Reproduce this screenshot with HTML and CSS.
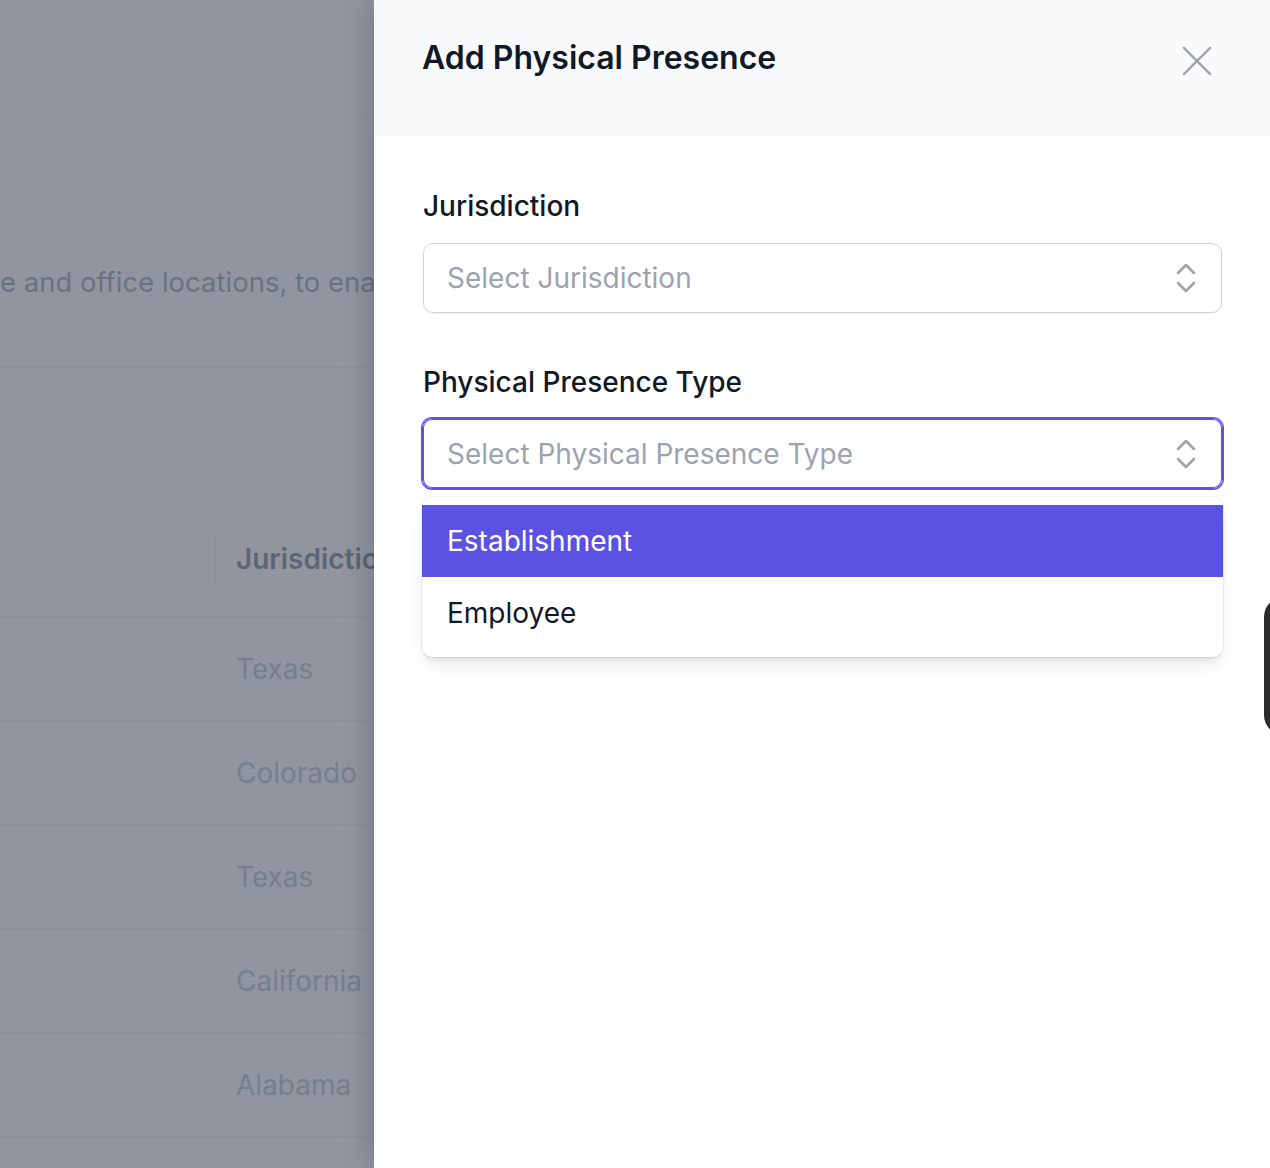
FILE: index.html
```html
<!DOCTYPE html>
<html lang="en">

<head>
    <meta charset="UTF-8">
    <meta name="viewport" content="width=device-width, initial-scale=1.0">
    <title>Add Physical Presence</title>
    <link rel="stylesheet" href="styles.css">
</head>

<body>
    <div class="page">
        <div class="page-top"></div>

        <div class="intro">
            <p>e and office locations, to enable</p>
        </div>

        <div class="table">
            <div class="table-head">
                <div class="col-first"><span class="divider"></span></div>
                <div class="col-name">Jurisdiction</div>
            </div>
            <div class="table-row"><div class="col-first"></div><div class="col-name">Texas</div></div>
            <div class="table-row"><div class="col-first"></div><div class="col-name">Colorado</div></div>
            <div class="table-row"><div class="col-first"></div><div class="col-name">Texas</div></div>
            <div class="table-row"><div class="col-first"></div><div class="col-name">California</div></div>
            <div class="table-row"><div class="col-first"></div><div class="col-name">Alabama</div></div>
        </div>
    </div>

    <div class="overlay"></div>

    <aside class="panel">
        <header class="panel-header">
            <h2>Add Physical Presence</h2>
            <button class="btn-close" aria-label="Close">
                <svg width="32" height="32" viewBox="0 0 32 32" fill="none" stroke="#9ca3af" stroke-width="2.4" stroke-linecap="round">
                    <path d="M2 2L30 30M30 2L2 30" />
                </svg>
            </button>
        </header>

        <form class="panel-form">
            <div class="field">
                <label>Jurisdiction</label>
                <div class="select">
                    <span class="placeholder">Select Jurisdiction</span>
                    <svg class="chevrons" width="20" height="32" viewBox="0 0 20 32" fill="none" stroke="#9ca3af" stroke-width="2.6" stroke-linecap="round" stroke-linejoin="round">
                        <polyline points="2,11 10,3 18,11" />
                        <polyline points="2,21 10,29 18,21" />
                    </svg>
                </div>
            </div>

            <div class="field">
                <label>Physical Presence Type</label>
                <div class="select select-focus">
                    <span class="placeholder">Select Physical Presence Type</span>
                    <svg class="chevrons" width="20" height="32" viewBox="0 0 20 32" fill="none" stroke="#9ca3af" stroke-width="2.6" stroke-linecap="round" stroke-linejoin="round">
                        <polyline points="2,11 10,3 18,11" />
                        <polyline points="2,21 10,29 18,21" />
                    </svg>
                </div>
                <ul class="options">
                    <li class="active">Establishment</li>
                    <li>Employee</li>
                </ul>
            </div>
        </form>
    </aside>

    <div class="launcher"></div>
</body>

</html>
```

FILE: styles.css
```css
* {
    box-sizing: border-box;
}

body {
    margin: 0;
    width: 1270px;
    height: 1168px;
    overflow: hidden;
    position: relative;
    font-family: Inter, "Noto Sans", sans-serif;
    background: #fff;
}

/* page behind the drawer */
.page {
    width: 1270px;
    height: 1168px;
}

.page-top {
    height: 114px;
    border-bottom: 1px solid #e5e7eb;
}

.intro {
    height: 254px;
    border-bottom: 1px solid #e5e7eb;
    display: flex;
    align-items: center;
}

.intro p {
    margin: 0;
    padding-top: 82px;
    white-space: nowrap;
    font-size: 27.5px;
    color: #6b7280;
}

.table {
    margin-top: 168px;
}

.table-head,
.table-row {
    display: flex;
    border-bottom: 1px solid #e5e7eb;
}

.table-head {
    height: 81px;
}

.table-row {
    height: 104px;
    align-items: center;
}

.col-first {
    width: 236px;
    height: 47px;
}

.divider {
    display: block;
    margin-left: 214px;
    width: 2px;
    height: 47px;
    background: #e5e7eb;
}

.col-name {
    font-size: 28px;
    color: #9ca3af;
}

.table-head .col-name {
    line-height: 47px;
    font-weight: 600;
    color: #374151;
}

.overlay {
    position: absolute;
    inset: 0;
    background: rgba(107, 114, 128, 0.75);
}

/* drawer */
.panel {
    position: absolute;
    top: 0;
    right: 0;
    width: 896px;
    height: 1168px;
    background: #fff;
    box-shadow: -8px 0 24px rgba(0, 0, 0, 0.14);
}

.panel-header {
    height: 137px;
    background: #f9fafb;
    padding: 38px 58px 0 48px;
    display: flex;
    justify-content: space-between;
    align-items: flex-start;
}

.panel-header h2 {
    margin: 0;
    font-size: 32px;
    line-height: 40px;
    font-weight: 600;
    color: #111827;
}

.btn-close {
    margin-top: 8px;
    padding: 0;
    width: 30px;
    height: 30px;
    border: none;
    background: none;
}

.btn-close svg {
    display: block;
    width: 30px;
    height: 30px;
}

.panel-form {
    padding: 49px 48px 0 49px;
}

.field {
    margin-bottom: 49px;
}

.field label {
    display: block;
    font-size: 28px;
    line-height: 40px;
    font-weight: 500;
    color: #111827;
    margin-bottom: 17px;
}

.select {
    height: 70px;
    border: 1px solid #cfd3d9;
    border-radius: 10px;
    box-shadow: 0 1px 2px rgba(0, 0, 0, 0.06);
    display: flex;
    align-items: center;
    justify-content: space-between;
    padding: 0 25px 0 23px;
}

.select-focus {
    height: 71px;
    margin: -1px -1px 0;
    padding-left: 24px;
    padding-right: 26px;
    border-color: #5b52e3;
    box-shadow: 0 0 0 1px #5b52e3, inset 0 0 0 1px #5b52e3;
}

.placeholder {
    font-size: 28px;
    color: #9ca3af;
}

.chevrons {
    display: block;
}

.options {
    list-style: none;
    margin: 8px -1px 0;
    padding: 8px 0;
    background: #fff;
    border-radius: 10px;
    box-shadow: 0 0 0 1px rgba(0, 0, 0, 0.05), 0 10px 15px -3px rgba(0, 0, 0, 0.1), 0 4px 6px -4px rgba(0, 0, 0, 0.1);
}

.options li {
    height: 72px;
    padding-left: 25px;
    display: flex;
    align-items: center;
    font-size: 28px;
    color: #111827;
}

.options li.active {
    background: #5b52e3;
    color: #fff;
}

.launcher {
    position: absolute;
    left: 1264px;
    top: 597px;
    width: 60px;
    height: 138px;
    border-radius: 20px;
    background: #2b2b2b;
}
```
